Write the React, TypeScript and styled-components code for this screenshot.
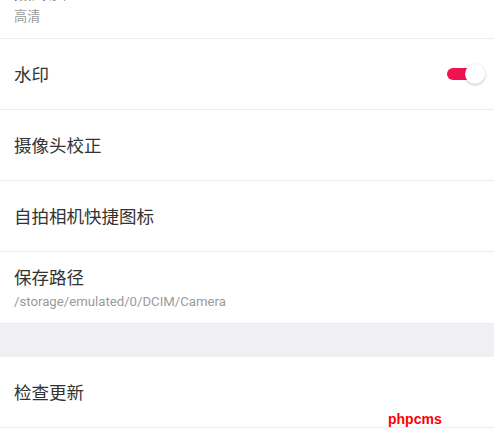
import React from "react";
import styled, { createGlobalStyle } from "styled-components";

const Global = createGlobalStyle`
  html, body { margin: 0; padding: 0; background: #fff; overflow: hidden; }
  body { font-family: Roboto, "Noto Sans CJK SC", sans-serif; }
`;

const Page = styled.div`
  position: relative;
  width: 494px;
  height: 438px;
  overflow: hidden;
  background: #fff;
`;

const List = styled.div`
  display: flex;
  flex-direction: column;
  margin-top: -33px;
`;

const Row = styled.div<{ $sub?: boolean }>`
  display: flex;
  align-items: center;
  justify-content: space-between;
  box-sizing: border-box;
  height: ${(p) => (p.$sub ? 72 : 71)}px;
  padding: 0 14px;
  border-bottom: 1px solid #ececec;
  background: #fff;
`;

const Texts = styled.div`
  display: flex;
  flex-direction: column;
  gap: 5px;
  margin-top: 1px;
`;

const Title = styled.div`
  font-size: 17.5px;
  line-height: 22px;
  color: #333;
  font-family: "Noto Sans CJK SC", sans-serif;
`;

const Sub = styled.div`
  font-size: 13.2px;
  line-height: 17px;
  color: #9a9a9a;
  font-family: Roboto, "Noto Sans CJK SC", sans-serif;
`;

const Gap = styled.div`
  height: 33px;
  background: #f0f0f4;
`;

const Toggle = styled.div`
  position: relative;
  width: 38px;
  height: 20px;
  margin-right: -5px;
  display: flex;
  align-items: center;
`;

const Track = styled.div`
  width: 28px;
  height: 12px;
  border-radius: 6px;
  background: #f0124f;
`;

const Knob = styled.div`
  position: absolute;
  right: 0;
  top: 0;
  width: 20px;
  height: 20px;
  border-radius: 50%;
  background: #fff;
  box-shadow: 0 1px 3px rgba(0, 0, 0, 0.25);
`;

const Watermark = styled.div`
  position: absolute;
  left: 388px;
  top: 411px;
  font-family: "Liberation Sans", sans-serif;
  font-weight: bold;
  font-size: 14px;
  color: #ff0000;
`;

export default function App() {
  return (
    <Page>
      <Global />
      <List>
        <Row $sub>
          <Texts>
            <Title>照片质量</Title>
            <Sub>高清</Sub>
          </Texts>
        </Row>
        <Row>
          <Title>水印</Title>
          <Toggle>
            <Track />
            <Knob />
          </Toggle>
        </Row>
        <Row>
          <Title>摄像头校正</Title>
        </Row>
        <Row>
          <Title>自拍相机快捷图标</Title>
        </Row>
        <Row $sub>
          <Texts>
            <Title>保存路径</Title>
            <Sub>/storage/emulated/0/DCIM/Camera</Sub>
          </Texts>
        </Row>
        <Gap />
        <Row>
          <Title>检查更新</Title>
        </Row>
      </List>
      <Watermark>phpcms</Watermark>
    </Page>
  );
}
